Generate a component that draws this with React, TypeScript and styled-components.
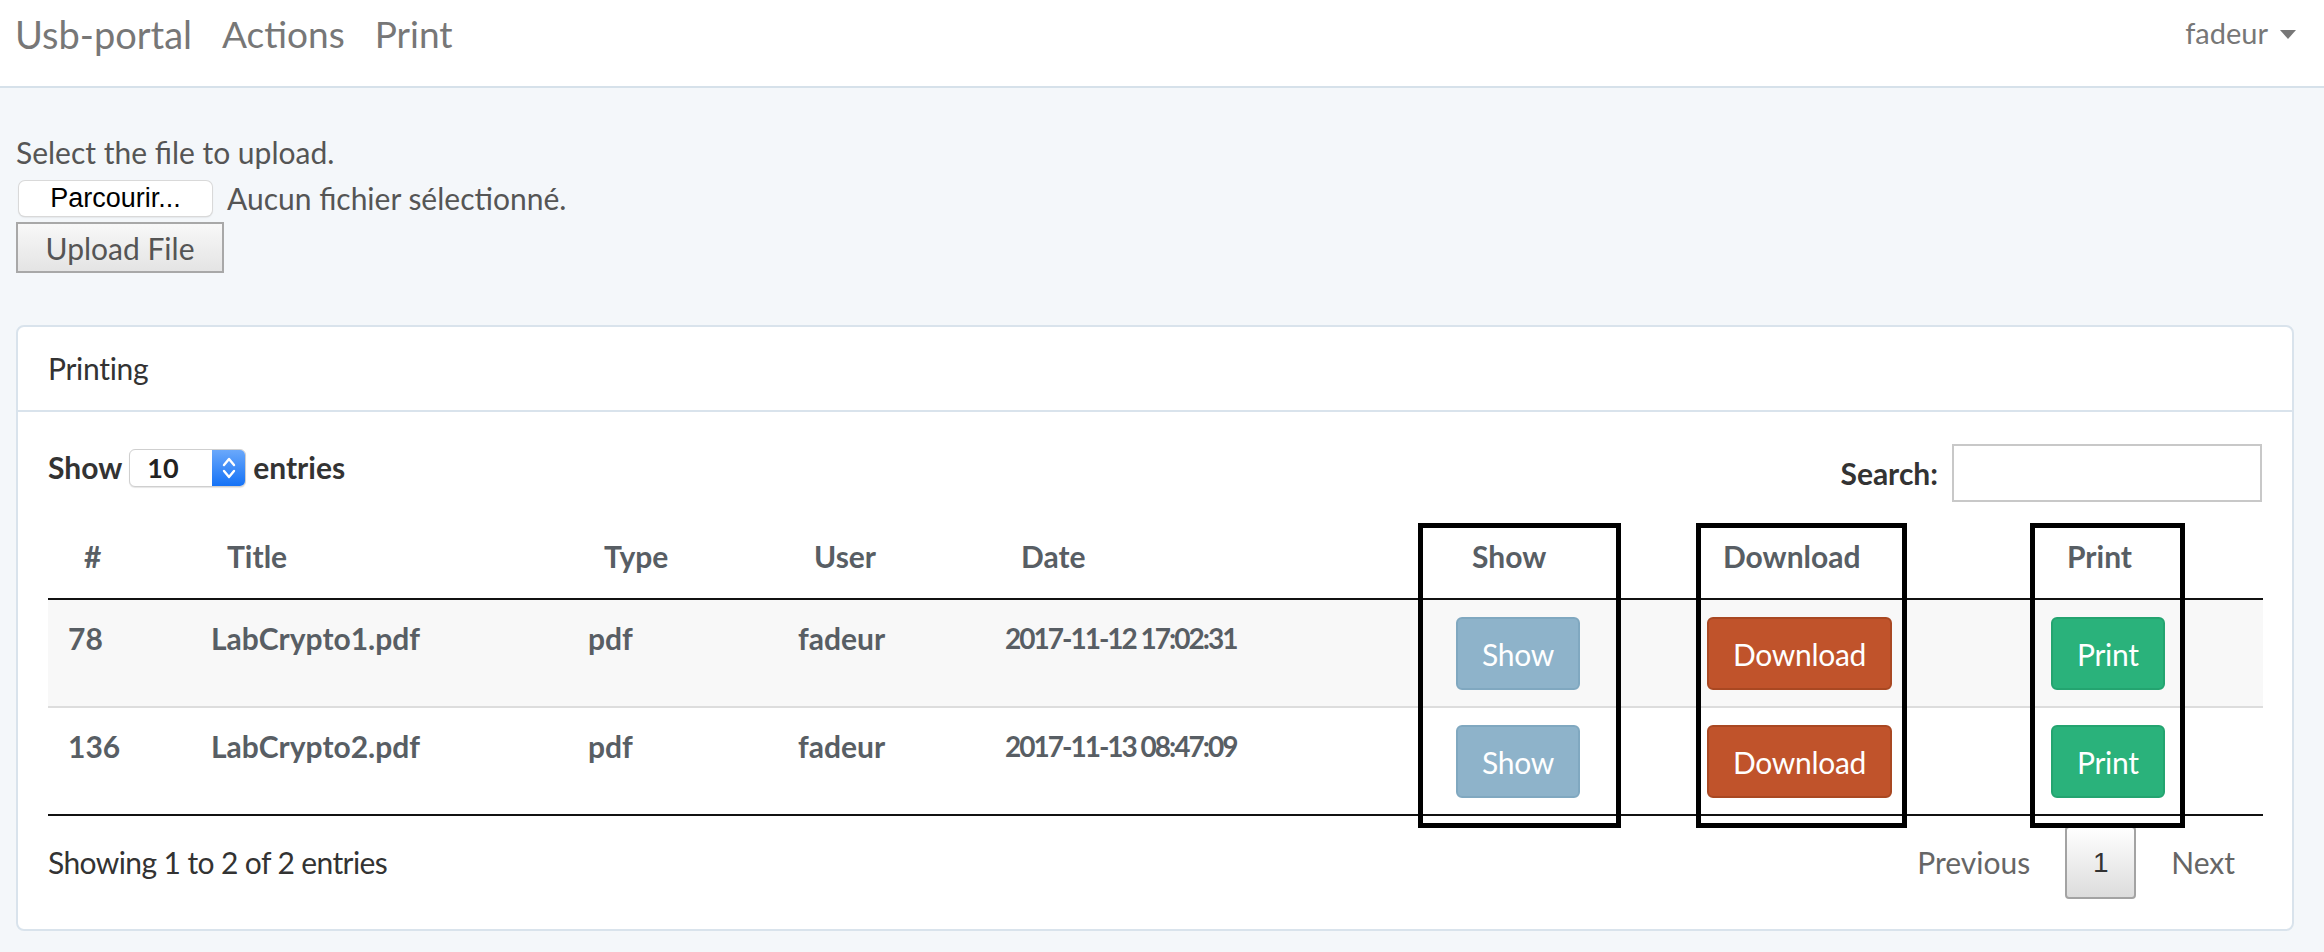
import React from "react";
import styled, { createGlobalStyle } from "styled-components";

const GlobalStyle = createGlobalStyle`
  html, body { margin: 0; padding: 0; }
  body {
    background: #f4f7fa;
    font-family: Lato, "Open Sans", sans-serif;
    font-size: 30px;
    line-height: 43px;
    color: #555;
  }
  * { box-sizing: border-box; }
`;

const Navbar = styled.nav`
  height: 88px;
  background: #fff;
  border-bottom: 2px solid #d6e1ea;
  display: flex;
  align-items: flex-start;
  padding: 11px 28px 0 15px;
`;

const Brand = styled.a`
  font-size: 38px;
  line-height: 46px;
  color: #777;
  text-decoration: none;
  margin-right: 30px;
`;

const NavLink = styled.a`
  font-size: 37px;
  line-height: 46px;
  color: #777;
  text-decoration: none;
  margin-right: 30px;
`;

const Spacer = styled.div`
  flex: 1;
`;

const UserMenu = styled.a`
  font-size: 29px;
  line-height: 46px;
  margin-top: -1px;
  color: #777;
  display: flex;
  align-items: center;
  gap: 12px;
`;

const Caret = styled.span`
  width: 0;
  height: 0;
  border-left: 8px solid transparent;
  border-right: 8px solid transparent;
  border-top: 9px solid #777;
  margin-top: 2px;
`;

const Main = styled.main`
  padding: 43px 30px 0 16px;
`;

const UploadForm = styled.form`
  display: flex;
  flex-direction: column;
  align-items: flex-start;
`;

const Label = styled.div`
  color: #555;
`;

const FileRow = styled.div`
  display: flex;
  align-items: center;
  gap: 15px;
  height: 35px;
  line-height: 35px;
  margin: 7px 0 0 3px;
`;

const FileButton = styled.span`
  display: inline-flex;
  align-items: center;
  justify-content: center;
  width: 193px;
  height: 35px;
  background: #fff;
  border-radius: 6px;
  box-shadow: 0 0 0 1px #d9d9d9, 0 1px 2px rgba(0, 0, 0, 0.2);
  font-family: "Liberation Sans", Arial, sans-serif;
  font-size: 27px;
  color: #000;
`;

const FileStatus = styled.span`
  color: #555;
`;

const UploadButton = styled.button`
  margin-top: 6px;
  width: 208px;
  height: 51px;
  border: 2px solid #a8a8a8;
  background: linear-gradient(#f8f8f8, #e4e4e4);
  font-family: inherit;
  font-size: 30px;
  color: #555;
  padding: 0;
`;

const Panel = styled.section`
  margin: 52px 0 22px 0;
  background: #fff;
  border: 2px solid #d9e3ec;
  border-radius: 8px;
`;

const PanelHeading = styled.div`
  padding: 20px 30px;
  border-bottom: 2px solid #d9e3ec;
  color: #333;
  letter-spacing: -0.3px;
`;

const PanelBody = styled.div`
  padding: 30px;
`;

const Controls = styled.div`
  display: flex;
  justify-content: space-between;
  align-items: flex-start;
  height: 60px;
`;

const LengthControl = styled.label`
  display: flex;
  align-items: center;
  gap: 7px;
  margin-top: 4px;
  font-weight: 700;
  color: #333;
`;

const SelectBox = styled.span`
  display: inline-flex;
  width: 117px;
  height: 38px;
  border: 1px solid #cfcfcf;
  border-radius: 6px;
  overflow: hidden;
  background: #fff;
  box-shadow: 0 1px 1px rgba(0, 0, 0, 0.1);
`;

const SelectValue = styled.span`
  flex: 1;
  padding-left: 17px;
  font-size: 27px;
  line-height: 36px;
  font-weight: 700;
  color: #222;
`;

const Stepper = styled.span`
  width: 33px;
  background: linear-gradient(#6aa8fb, #1572f6);
  display: flex;
  align-items: center;
  justify-content: center;
`;

const SearchControl = styled.label`
  display: flex;
  align-items: center;
  gap: 14px;
  margin-top: 2px;
  font-weight: 700;
  color: #333;
`;

const SearchInput = styled.input`
  width: 310px;
  height: 58px;
  border: 2px solid #c8c8c8;
  background: #fff;
  font-size: 28px;
`;

const TableWrap = styled.div`
  position: relative;
  margin-top: 13px;
`;

const Table = styled.table`
  width: 100%;
  border-collapse: collapse;
  table-layout: fixed;
`;

const Col = styled.col<{ $w: number }>`
  width: ${(p) => p.$w}px;
`;

const Th = styled.th`
  text-align: left;
  padding: 20px 36px;
  font-weight: 700;
  color: #585e64;
  border-bottom: 2px solid #111;
  white-space: nowrap;
`;

const Tr = styled.tr<{ $striped?: boolean; $last?: boolean }>`
  background: ${(p) => (p.$striped ? "#f8f8f8" : "#fff")};
  border-bottom: ${(p) => (p.$last ? "2px solid #111" : "2px solid #dddddd")};
`;

const Td = styled.td<{ $tight?: boolean }>`
  padding: 17px 20px 16px;
  vertical-align: top;
  font-weight: 700;
  color: #585e64;
  white-space: nowrap;
  font-size: ${(p) => (p.$tight ? "28px" : "30px")};
  letter-spacing: ${(p) => (p.$tight ? "-2px" : "0")};
`;

const ActionButton = styled.button<{ $bg: string; $border: string }>`
  height: 73px;
  padding: 0 24px;
  border-radius: 6px;
  border: 2px solid ${(p) => p.$border};
  background: ${(p) => p.$bg};
  color: #fff;
  font-family: inherit;
  font-size: 30px;
  letter-spacing: -0.3px;
`;

const Marker = styled.div<{ $left: number; $width: number }>`
  position: absolute;
  top: 8px;
  left: ${(p) => p.$left}px;
  width: ${(p) => p.$width}px;
  height: 305px;
  border: 5px solid #000;
  pointer-events: none;
`;

const Footer = styled.div`
  display: flex;
  justify-content: space-between;
  align-items: center;
  margin-top: 10px;
`;

const Info = styled.div`
  color: #333;
  letter-spacing: -0.6px;
`;

const Pagination = styled.div`
  display: flex;
  align-items: center;
  gap: 35px;
  padding-right: 27px;
`;

const PageLink = styled.a`
  color: #666;
`;

const PageCurrent = styled.span`
  display: inline-flex;
  align-items: center;
  justify-content: center;
  width: 71px;
  height: 73px;
  border: 2px solid #a3a3a3;
  border-radius: 4px;
  background: linear-gradient(#ffffff, #dcdcdc);
  color: #333;
  font-family: "Liberation Sans", Arial, sans-serif;
  font-size: 28px;
`;

const rows = [
  { id: "78", title: "LabCrypto1.pdf", type: "pdf", user: "fadeur", date: "2017-11-12 17:02:31" },
  { id: "136", title: "LabCrypto2.pdf", type: "pdf", user: "fadeur", date: "2017-11-13 08:47:09" },
];

const widths = [143, 377, 210, 207, 451, 251, 344, 232];

export default function App() {
  return (
    <>
      <GlobalStyle />
      <Navbar>
        <Brand>Usb-portal</Brand>
        <NavLink>Actions</NavLink>
        <NavLink>Print</NavLink>
        <Spacer />
        <UserMenu>
          fadeur <Caret />
        </UserMenu>
      </Navbar>
      <Main>
        <UploadForm>
          <Label>Select the file to upload.</Label>
          <FileRow>
            <FileButton>Parcourir...</FileButton>
            <FileStatus>Aucun fichier sélectionné.</FileStatus>
          </FileRow>
          <UploadButton type="button">Upload File</UploadButton>
        </UploadForm>
        <Panel>
          <PanelHeading>Printing</PanelHeading>
          <PanelBody>
            <Controls>
              <LengthControl>
                Show
                <SelectBox>
                  <SelectValue>10</SelectValue>
                  <Stepper>
                    <svg width="14" height="24" viewBox="0 0 14 24" fill="none" stroke="#fff" strokeWidth="2.4" strokeLinecap="round" strokeLinejoin="round">
                      <path d="M2 9 L7 3 L12 9" />
                      <path d="M2 15 L7 21 L12 15" />
                    </svg>
                  </Stepper>
                </SelectBox>
                entries
              </LengthControl>
              <SearchControl>
                Search:
                <SearchInput type="text" />
              </SearchControl>
            </Controls>
            <TableWrap>
              <Table>
                <colgroup>
                  {widths.map((w, i) => (
                    <Col key={i} $w={w} />
                  ))}
                </colgroup>
                <thead>
                  <tr>
                    <Th>#</Th>
                    <Th>Title</Th>
                    <Th>Type</Th>
                    <Th>User</Th>
                    <Th>Date</Th>
                    <Th>Show</Th>
                    <Th>Download</Th>
                    <Th>Print</Th>
                  </tr>
                </thead>
                <tbody>
                  {rows.map((r, i) => (
                    <Tr key={r.id} $striped={i === 0} $last={i === rows.length - 1}>
                      <Td>{r.id}</Td>
                      <Td>{r.title}</Td>
                      <Td>{r.type}</Td>
                      <Td>{r.user}</Td>
                      <Td $tight>{r.date}</Td>
                      <Td>
                        <ActionButton $bg="#8eb3ca" $border="#80a8c0">Show</ActionButton>
                      </Td>
                      <Td>
                        <ActionButton $bg="#c0532b" $border="#a94822">Download</ActionButton>
                      </Td>
                      <Td>
                        <ActionButton $bg="#2ab27b" $border="#24a470">Print</ActionButton>
                      </Td>
                    </Tr>
                  ))}
                </tbody>
              </Table>
              <Marker $left={1370} $width={203} />
              <Marker $left={1648} $width={211} />
              <Marker $left={1982} $width={155} />
            </TableWrap>
            <Footer>
              <Info>Showing 1 to 2 of 2 entries</Info>
              <Pagination>
                <PageLink>Previous</PageLink>
                <PageCurrent>1</PageCurrent>
                <PageLink>Next</PageLink>
              </Pagination>
            </Footer>
          </PanelBody>
        </Panel>
      </Main>
    </>
  );
}
